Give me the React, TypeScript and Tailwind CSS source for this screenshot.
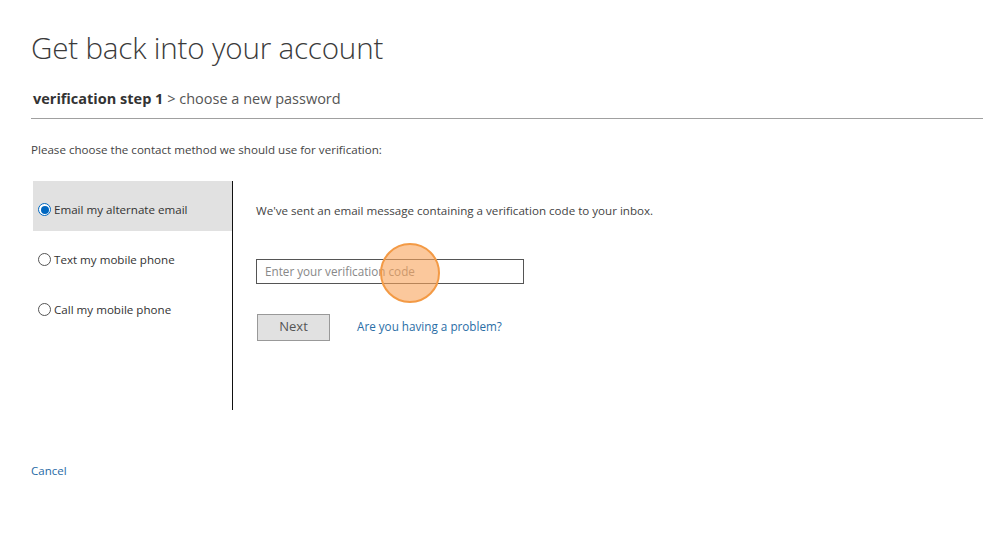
export default function App() {
  const options = [
    { id: "email", label: "Email my alternate email", selected: true },
    { id: "text", label: "Text my mobile phone", selected: false },
    { id: "call", label: "Call my mobile phone", selected: false },
  ];

  return (
    <div className="min-h-[550px] w-[983px] bg-white font-['Open_Sans',sans-serif] text-[#333]">
      <div className="pl-[31px] pt-[26px]">
        <h1 className="text-[29.6px] leading-[44px] font-light tracking-[-0.2px] text-[#3b3b3b]">
          Get back into your account
        </h1>

        <div className="mt-[18px] border-b border-[#a0a0a0] pb-[9px] pl-[2px] text-[14.5px] leading-[21px]">
          <span className="font-bold text-[#333]">verification step 1</span>
          <span className="text-[#555]"> &gt; choose a new password</span>
        </div>

        <p className="mt-[23px] text-[11.6px] leading-[16px] text-[#444]">
          Please choose the contact method we should use for verification:
        </p>

        <div className="mt-[23px] flex">
          <div className="w-[201px] pl-[2px]">
            {options.map((o) => (
              <label
                key={o.id}
                className={`flex h-[50px] items-start gap-[3px] pl-[5px] pt-[21px] text-[11.6px] leading-[16px] text-[#333] ${
                  o.selected ? "bg-[#e1e1e1]" : ""
                }`}
              >
                {o.selected ? (
                  <span className="mt-[1px] flex h-[13px] w-[13px] items-center justify-center rounded-full border border-[#0067c0] bg-white">
                    <span className="h-[8px] w-[8px] rounded-full bg-[#0067c0]" />
                  </span>
                ) : (
                  <span className="mt-[1px] h-[13px] w-[13px] rounded-full border border-[#555] bg-white" />
                )}
                {o.label}
              </label>
            ))}
          </div>

          <div className="h-[229px] w-px bg-[#111]" />

          <div className="pl-[23px] pt-[22px]">
            <p className="text-[11.6px] leading-[16px] text-[#444]">
              We've sent an email message containing a verification code to your inbox.
            </p>

            <div className="relative mt-[39px] w-[268px]">
              <input
                type="text"
                placeholder="Enter your verification code"
                className="h-[25px] w-full border border-[#555] px-[8px] text-[11.7px] text-[#333] placeholder:text-[#888] outline-none"
              />
              <div className="pointer-events-none absolute left-[124px] top-[-15px] h-[60px] w-[60px] rounded-full border-2 border-[#f39a45] bg-[#f9a45a]/60" />
            </div>

            <div className="mt-[30px] flex items-center">
              <button className="ml-[1px] h-[27px] w-[73px] border border-[#999] bg-[#e1e1e1] text-[13px] text-[#555]">
                Next
              </button>
              <a className="ml-[27px] text-[11.7px] text-[#2b6ea6]">Are you having a problem?</a>
            </div>
          </div>
        </div>

        <a className="mt-[52px] block text-[11.5px] text-[#1f6aa5]">Cancel</a>
      </div>
    </div>
  );
}
